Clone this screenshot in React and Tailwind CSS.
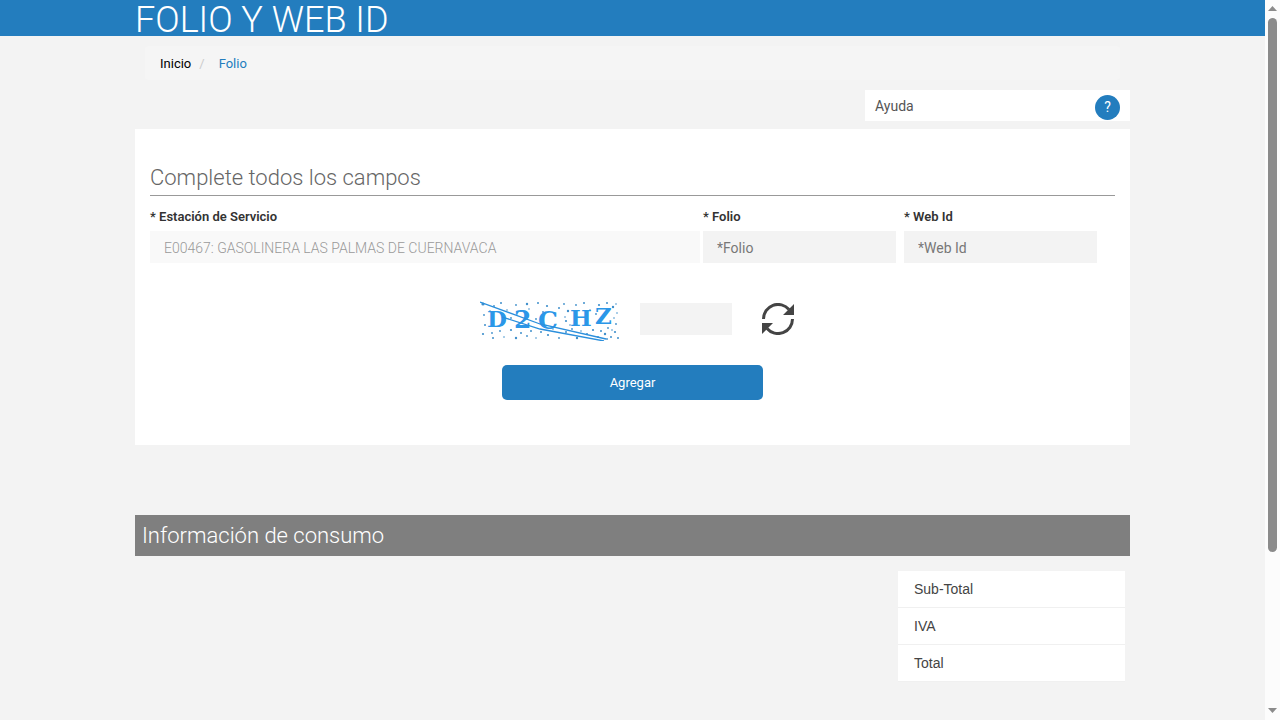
const speckles = [
  [3, 3, 1.6], [14, 5, 0.9], [21, 2, 1], [27, 9, 0.8], [36, 4, 0.9], [41, 10, 1.1], [47, 3, 1.2], [49, 8, 0.8],
  [58, 2, 1], [63, 11, 0.9], [67, 5, 1.1], [74, 12, 0.8], [79, 7, 1], [84, 3, 0.9], [88, 10, 1.2], [96, 4, 0.9],
  [104, 2, 1], [110, 9, 0.8], [119, 4, 1.1], [127, 2, 1], [133, 6, 1.2], [137, 12, 0.8], [136, 3, 0.8], [4, 14, 0.9],
  [5, 24, 1], [3, 33, 1.1], [12, 32, 0.9], [13, 37, 1], [20, 30, 0.9], [24, 36, 0.8], [31, 29, 1.1], [36, 37, 1.2],
  [41, 32, 1], [47, 35, 0.9], [51, 30, 1], [56, 37, 0.8], [61, 31, 1], [68, 34, 1.1], [73, 28, 0.8], [79, 37, 0.9],
  [86, 31, 1], [92, 28, 0.9], [97, 37, 1.2], [101, 30, 0.8], [107, 33, 1], [113, 29, 1.1], [118, 36, 0.9], [121, 30, 1],
  [125, 33, 1.2], [128, 27, 0.9], [131, 36, 1], [135, 31, 1.1], [138, 37, 1], [136, 23, 0.9], [56, 18, 0.9], [86, 20, 1.1],
  [85, 16, 0.8], [31, 17, 0.9], [116, 13, 0.9], [134, 17, 0.8], [10, 10, 0.8], [90, 24, 0.8], [132, 29, 0.8], [127, 38, 0.9],
];

function Captcha() {
  return (
    <svg className="h-10 w-[140px]" viewBox="0 0 140 40" role="img" aria-label="Captcha">
      <g fill="#3f8fcb">
        {speckles.map(([x, y, r]) => (
          <circle key={`${x}-${y}`} cx={x} cy={y} r={r} />
        ))}
      </g>
      <g fill="#2b97e8" fontFamily='"DejaVu Serif", serif' fontWeight="700" fontSize="23">
        <text x="7" y="26">D</text>
        <text x="34" y="27" fontSize="25">2</text>
        <text x="58" y="28" fontSize="25">C</text>
        <text x="90" y="25">H</text>
        <text x="115" y="23">Z</text>
      </g>
      <g stroke="#2b8fdc" strokeWidth="1.3" fill="none">
        <path d="M0 1 L60 23 L126 38" />
        <path d="M22 16 L60 28 L124 40" />
      </g>
    </svg>
  );
}

function RefreshIcon() {
  return (
    <svg className="size-8" viewBox="0 0 32 32" aria-hidden="true">
      <g fill="none" stroke="#444" strokeWidth="3">
        <path d="M1.5 16A14.5 14.5 0 0 1 27 6.5" />
        <path d="M30.5 16A14.5 14.5 0 0 1 5 25.5" />
      </g>
      <path d="M32 1V12H21Z M0 31V20H11Z" fill="#444" />
    </svg>
  );
}

function Field({ id, label, className, ...props }) {
  return (
    <div className={className}>
      <label htmlFor={id} className="block text-[13px] leading-5 font-semibold text-[#333]">
        {label}
      </label>
      <input
        id={id}
        type="text"
        className="mt-1 block h-8 w-full bg-[#f3f3f3] px-3.5 pt-0.5 text-sm text-[#555] placeholder:text-[#777] disabled:bg-[#f9f9f9] disabled:font-light disabled:text-[#999]"
        {...props}
      />
    </div>
  );
}

function Scrollbar() {
  return (
    <div className="sticky top-0 flex h-screen w-[15px] shrink-0 flex-col items-center bg-[#fcfcfc]" aria-hidden="true">
      <svg className="h-[18px] w-[15px] shrink-0" viewBox="0 0 15 18">
        <path d="M3 11L7.5 6L12 11Z" fill="#8b8b8b" />
      </svg>
      <div className="w-full grow px-[3px]">
        <div className="h-[78%] w-[9px] rounded-full bg-[#8b8b8b]" />
      </div>
      <svg className="h-[18px] w-[15px] shrink-0" viewBox="0 0 15 18">
        <path d="M3 6L7.5 11L12 6Z" fill="#8b8b8b" />
      </svg>
    </div>
  );
}

export default function App() {
  return (
    <div className="flex min-h-screen bg-[#f3f3f3] font-['Roboto',sans-serif] text-[#333]">
      <div className="min-w-0 flex-1">
        <header className="h-9 bg-[#237dbe]">
          <div className="mx-auto max-w-[995px]">
            <h1 className="text-[36px] leading-10 font-light text-white">FOLIO Y WEB ID</h1>
          </div>
        </header>

        <main className="mx-auto max-w-[995px]">
          <nav className="mx-2.5 mt-2.5 rounded bg-[#f5f5f5] px-[15px] pt-[9px] pb-[7px]" aria-label="Ruta">
            <ol className="flex text-[13px] leading-[18px]">
              <li><a href="#" className="text-black">Inicio</a></li>
              <li className="px-2 text-[#ccc]" aria-hidden="true">/</li>
              <li className="pl-1.5"><a href="#" className="text-[#237dbe]">Folio</a></li>
            </ol>
          </nav>

          <div className="mt-2.5 ml-auto flex h-[31px] w-[265px] items-center justify-between bg-white px-2.5">
            <span className="text-sm text-[#555]">Ayuda</span>
            <button type="button" aria-label="Ayuda" className="mt-[3px] size-[25px] rounded-full bg-[#237dbe] text-sm text-white">
              ?
            </button>
          </div>

          <form className="mt-2 bg-white px-[15px] pt-8 pb-[45px]">
            <h2 className="border-b border-[#999] text-[22px] leading-[34px] font-light text-[#666]">
              Complete todos los campos
            </h2>
            <div className="mt-[11px] grid grid-cols-[553fr_201fr_211fr]">
              <Field id="estacion" label="* Estación de Servicio" className="pr-[3px]" defaultValue="E00467: GASOLINERA LAS PALMAS DE CUERNAVACA" disabled />
              <Field id="folio" label="* Folio" className="pr-2" placeholder="*Folio" />
              <Field id="webid" label="* Web Id" className="pr-[18px]" placeholder="*Web Id" />
            </div>
            <div className="mt-[38px] flex items-start justify-center pl-2">
              <Captcha />
              <input type="text" aria-label="Captcha" className="mt-0.5 ml-5 h-8 w-[92px] bg-[#f3f3f3] px-3.5" />
              <button type="button" aria-label="Actualizar" className="mt-0.5 ml-[30px]">
                <RefreshIcon />
              </button>
            </div>
            <button type="button" className="mx-auto mt-6 block h-[35px] w-[261px] rounded-[5px] bg-[#237dbe] text-[13px] text-white">
              Agregar
            </button>
          </form>

          <section className="mt-[70px]">
            <h2 className="bg-[#7f7f7f] px-[7px] text-[22px] leading-[41px] font-light text-white">
              Información de consumo
            </h2>
            <table className="mt-[15px] mr-[5px] ml-auto w-[227px] bg-white font-['Liberation_Sans',Arial,sans-serif] text-sm leading-5 text-[#444]">
              <tbody>
                {["Sub-Total", "IVA", "Total"].map((name) => (
                  <tr key={name} className="border-b border-[#f0f0f0]">
                    <th scope="row" className="px-4 py-2 text-left font-normal">{name}</th>
                    <td />
                  </tr>
                ))}
              </tbody>
            </table>
          </section>
        </main>
      </div>
      <Scrollbar />
    </div>
  );
}
